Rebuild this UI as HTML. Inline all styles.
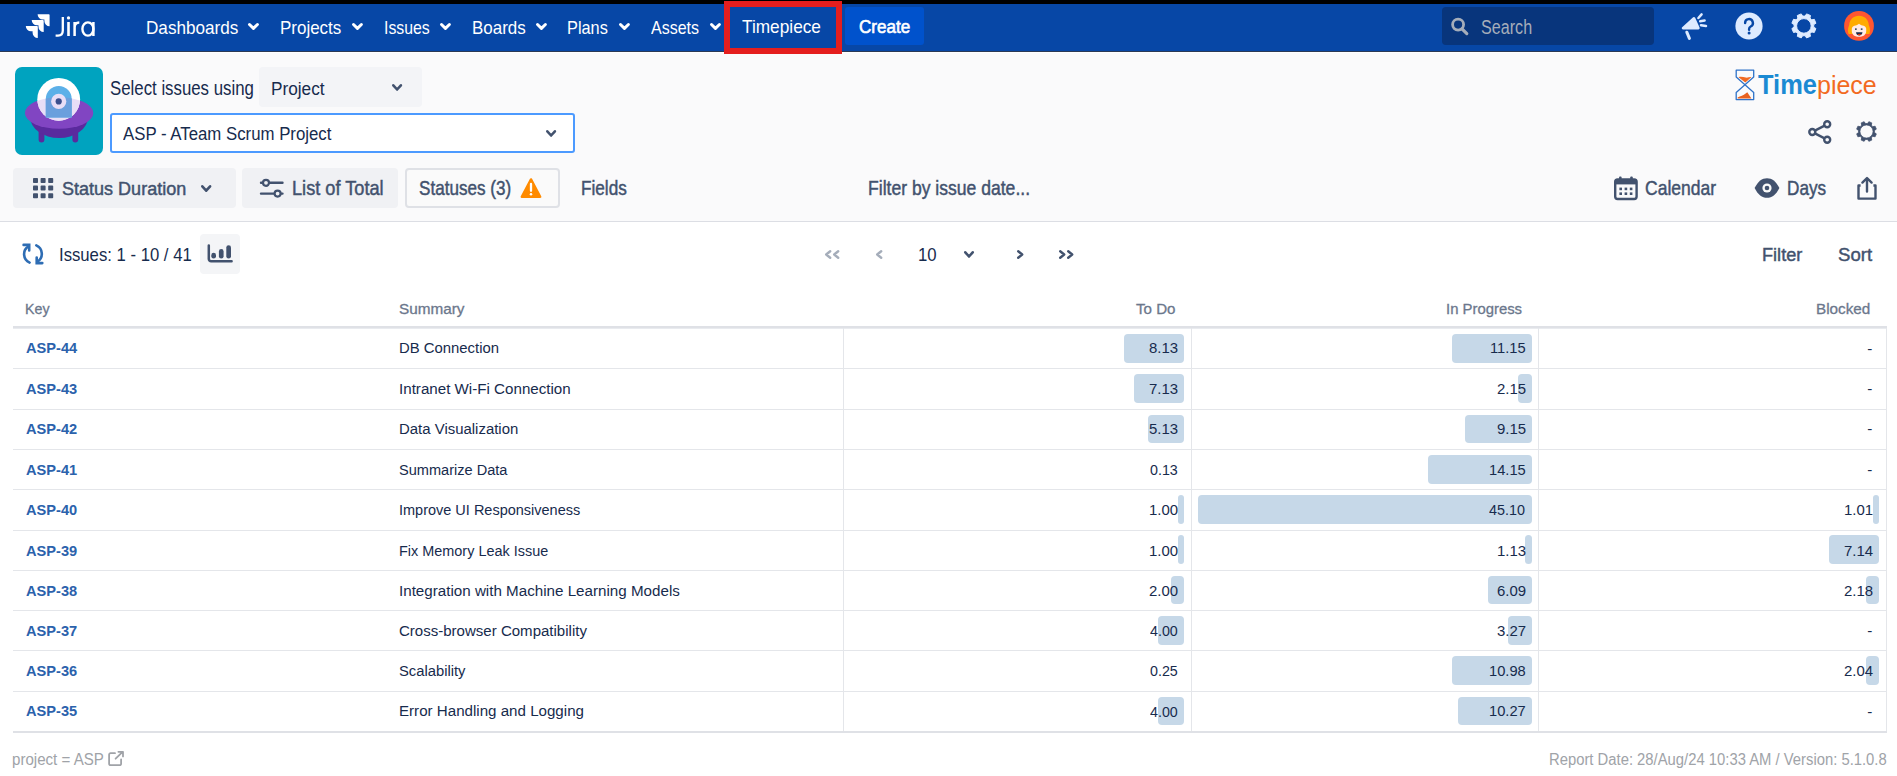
<!DOCTYPE html>
<html><head><meta charset="utf-8"><style>
html,body{margin:0;padding:0;}
body{width:1897px;height:776px;overflow:hidden;position:relative;background:#fff;font-family:"Liberation Sans", sans-serif;}
.t{position:absolute;white-space:nowrap;line-height:1;transform-origin:0 0;}
.r{position:absolute;box-sizing:content-box;}
svg.r{overflow:visible;}
</style></head><body>
<div class="r" style="left:0px;top:0px;width:1897px;height:4px;background:#000;"></div>
<div class="r" style="left:0px;top:4px;width:1897px;height:47px;background:#0747a6;"></div>
<div class="r" style="left:0px;top:51px;width:1897px;height:1px;background:#2c3a55;"></div>
<div class="r" style="left:0px;top:52px;width:1897px;height:1px;background:#ffffff;"></div>
<div class="r" style="left:0px;top:53px;width:1897px;height:168px;background:#fafafb;"></div>
<div class="r" style="left:0px;top:221px;width:1897px;height:1px;background:#dcdee4;"></div>
<svg class="r" style="left:24px;top:12px;" width="28" height="28" viewBox="0 0 28 28">
<defs>
<linearGradient id="g1" x1="1" y1="0" x2="0" y2="1"><stop offset="0" stop-color="#fff"/><stop offset="0.55" stop-color="#fff"/><stop offset="1" stop-color="#c8d7f0"/></linearGradient>
</defs>
<path d="M25.8 2.2 H13.6 a5.2 5.2 0 0 0 5.2 5.2 h1.6 v1.6 a5.2 5.2 0 0 0 5.2 5.2 V3 a0.8 0.8 0 0 0 -0.8 -0.8z" fill="#fff"/>
<path d="M19.9 8.1 H7.7 a5.2 5.2 0 0 0 5.2 5.2 h1.6 v1.6 a5.2 5.2 0 0 0 5.2 5.2 V8.9 a0.8 0.8 0 0 0 -0.8 -0.8z" fill="url(#g1)"/>
<path d="M14 14 H1.8 a5.2 5.2 0 0 0 5.2 5.2 h1.6 v1.6 a5.2 5.2 0 0 0 5.2 5.2 V14.8 a0.8 0.8 0 0 0 -0.8 -0.8z" fill="url(#g1)"/>
</svg>
<svg class="r" style="left:50px;top:12px;" width="50" height="30" viewBox="0 0 50 30">
<path d="M12.8 5 V18.6 C12.8 22.2 11 23.7 8 23.7 H5.6" fill="none" stroke="#fff" stroke-width="2.3"/>
<circle cx="18.5" cy="5.9" r="1.65" fill="#fff"/>
<path d="M18.5 10 V24" fill="none" stroke="#fff" stroke-width="2.6"/>
<path d="M24.6 10 V24 M24.6 15.5 C24.6 12 26.4 10.6 29.3 10.6" fill="none" stroke="#fff" stroke-width="2.5"/>
<ellipse cx="37.9" cy="17" rx="5.5" ry="6.6" fill="none" stroke="#fff" stroke-width="2.4"/>
<path d="M43.4 10 V24" fill="none" stroke="#fff" stroke-width="2.5"/>
</svg>
<div class="t" style="left:146.44px;top:18.80px;font-size:18.31px;color:#ffffff;transform:scaleX(0.9353);">Dashboards</div>
<svg class="r" style="left:246px;top:21px;" width="15" height="11" viewBox="0 0 15 11"><path d="M3.50 3.50 L7.45 7.30 L11.40 3.50" fill="none" stroke="#fff" stroke-width="3" stroke-linecap="round" stroke-linejoin="round"/></svg>
<div class="t" style="left:280.20px;top:18.80px;font-size:18.31px;color:#ffffff;transform:scaleX(0.9270);">Projects</div>
<svg class="r" style="left:350px;top:21px;" width="15" height="11" viewBox="0 0 15 11"><path d="M3.50 3.50 L7.45 7.30 L11.40 3.50" fill="none" stroke="#fff" stroke-width="3" stroke-linecap="round" stroke-linejoin="round"/></svg>
<div class="t" style="left:384.20px;top:18.80px;font-size:18.31px;color:#ffffff;transform:scaleX(0.8657);">Issues</div>
<svg class="r" style="left:438px;top:21px;" width="15" height="11" viewBox="0 0 15 11"><path d="M3.50 3.50 L7.45 7.30 L11.40 3.50" fill="none" stroke="#fff" stroke-width="3" stroke-linecap="round" stroke-linejoin="round"/></svg>
<div class="t" style="left:471.96px;top:18.80px;font-size:18.31px;color:#ffffff;transform:scaleX(0.9276);">Boards</div>
<svg class="r" style="left:534px;top:21px;" width="15" height="11" viewBox="0 0 15 11"><path d="M3.50 3.50 L7.45 7.30 L11.40 3.50" fill="none" stroke="#fff" stroke-width="3" stroke-linecap="round" stroke-linejoin="round"/></svg>
<div class="t" style="left:567.18px;top:18.80px;font-size:18.31px;color:#ffffff;transform:scaleX(0.8912);">Plans</div>
<svg class="r" style="left:617px;top:21px;" width="15" height="11" viewBox="0 0 15 11"><path d="M3.50 3.50 L7.45 7.30 L11.40 3.50" fill="none" stroke="#fff" stroke-width="3" stroke-linecap="round" stroke-linejoin="round"/></svg>
<div class="t" style="left:651.00px;top:18.80px;font-size:18.31px;color:#ffffff;transform:scaleX(0.8734);">Assets</div>
<svg class="r" style="left:708px;top:21px;" width="15" height="11" viewBox="0 0 15 11"><path d="M3.50 3.50 L7.45 7.30 L11.40 3.50" fill="none" stroke="#fff" stroke-width="3" stroke-linecap="round" stroke-linejoin="round"/></svg>
<div class="t" style="left:742.26px;top:19.45px;font-size:17.88px;color:#ffffff;transform:scaleX(0.9661);">Timepiece</div>
<div class="r" style="left:724px;top:1px;width:106px;height:41px;border:6px solid #e41e1e;"></div>
<div class="r" style="left:845px;top:7px;width:79px;height:38px;background:#0052cc;border-radius:3px;"></div>
<div class="t" style="left:859.05px;top:17.59px;font-size:18.02px;color:#fff;transform:scaleX(0.9475);-webkit-text-stroke:0.6px #fff;">Create</div>
<div class="r" style="left:1442px;top:7px;width:212px;height:38px;background:#08357c;border-radius:4px;"></div>
<svg class="r" style="left:1449px;top:16px;" width="22" height="22" viewBox="0 0 22 22"><circle cx="9.1" cy="8.6" r="5.5" fill="none" stroke="#a5adba" stroke-width="2.8"/><path d="M13 12.8 L17.8 17.6" stroke="#a5adba" stroke-width="3.2" stroke-linecap="round"/></svg>
<div class="t" style="left:1480.90px;top:17.79px;font-size:19.33px;color:#a5adba;transform:scaleX(0.8344);">Search</div>
<svg class="r" style="left:1678px;top:10px;" width="32" height="32" viewBox="0 0 32 32">
<path d="M5 18.1 L16 8.3 L20.4 18.1 Z" fill="#deebff" stroke="#deebff" stroke-width="2.6" stroke-linejoin="round"/>
<path d="M8.8 22.2 L11.4 28.4" stroke="#deebff" stroke-width="3" stroke-linecap="round"/>
<path d="M20.4 8 L23.6 4.4 M22.2 11.3 L26.6 10.5 M23 15.3 L28 16.1" stroke="#deebff" stroke-width="2.5" stroke-linecap="round"/>
</svg>
<svg class="r" style="left:1735px;top:12px;" width="28" height="28" viewBox="0 0 28 28">
<circle cx="14" cy="14" r="13.6" fill="#deebff"/>
<path d="M10.1 11 a3.9 3.9 0 1 1 5.6 3.5 c-1.1 0.6 -1.6 1.2 -1.6 2.4 v0.9" fill="none" stroke="#0747a6" stroke-width="2.4" stroke-linecap="round"/>
<circle cx="14.1" cy="21.1" r="1.5" fill="#0747a6"/>
</svg>
<svg class="r" style="left:1790px;top:12px;" width="28" height="28" viewBox="0 0 28 28"><path d="M23.72 15.19 L25.91 16.56 L24.27 20.51 L21.75 19.93 L19.93 21.75 L20.51 24.27 L16.56 25.91 L15.19 23.72 L12.61 23.72 L11.24 25.91 L7.29 24.27 L7.87 21.75 L6.05 19.93 L3.53 20.51 L1.89 16.56 L4.08 15.19 L4.08 12.61 L1.89 11.24 L3.53 7.29 L6.05 7.87 L7.87 6.05 L7.29 3.53 L11.24 1.89 L12.61 4.08 L15.19 4.08 L16.56 1.89 L20.51 3.53 L19.93 6.05 L21.75 7.87 L24.27 7.29 L25.91 11.24 L23.72 12.61Z M21.20 13.90 A7.3 7.3 0 1 0 6.60 13.90 A7.3 7.3 0 1 0 21.20 13.90Z" fill="#deebff" fill-rule="evenodd" stroke="#deebff" stroke-width="1" stroke-linejoin="round"/></svg>
<svg class="r" style="left:1843px;top:10px;" width="32" height="32" viewBox="0 0 32 32">
<circle cx="16" cy="15.9" r="14.9" fill="#ff5630"/>
<path d="M5.6 24 C4.2 20 5.4 17 6.2 15 C6.5 9.5 10.5 5.7 16 5.7 C21.5 5.7 25.5 9.5 25.8 15 C26.6 17 27.8 20 26.4 24 Z" fill="#ffab00"/>
<path d="M8.8 18.5 C9.5 16 11 15.6 12.5 15.4 C14 15.2 15.2 14.6 16 13.8 C16.8 14.6 18 15.2 19.5 15.4 C21 15.6 22.5 16 23.2 18.5 V21 C23.2 25 20 26.8 16 26.8 C12 26.8 8.8 25 8.8 21 Z" fill="#ffebe6"/>
<rect x="12" y="18.3" width="1.7" height="1.7" fill="#42526e"/><rect x="17.8" y="18.3" width="1.7" height="1.7" fill="#42526e"/>
<path d="M13 22.2 H19.5 C19.2 24.4 17.8 25.5 16.2 25.5 C14.6 25.5 13.3 24.4 13 22.2Z" fill="#172b4d"/>
<path d="M14.3 24.6 C15.4 23.6 17 23.6 18.2 24.6 C17.4 25.4 15.1 25.4 14.3 24.6Z" fill="#de350b"/>
</svg>
<svg class="r" style="left:15px;top:67px;" width="88" height="88" viewBox="0 0 88 88">
<defs>
<clipPath id="ell"><ellipse cx="44.1" cy="46" rx="34.2" ry="15.8"/></clipPath>
</defs>
<rect x="0" y="0" width="88" height="88" rx="7" fill="#00a3bf"/>
<rect x="23.6" y="58" width="5.8" height="17.4" rx="2.9" fill="#5a2a9e"/>
<rect x="57.4" y="58" width="5.8" height="17.4" rx="2.9" fill="#5a2a9e"/>
<ellipse cx="44.1" cy="50" rx="29" ry="21" fill="#5a2a9e"/>
<ellipse cx="44.1" cy="46" rx="34.2" ry="15.8" fill="#8145c2"/>
<circle cx="43.7" cy="32.3" r="21.4" fill="#ffffff"/>
<circle cx="43.7" cy="32.3" r="21.4" fill="#e9def6" clip-path="url(#ell)"/>
<path d="M30.8 50.6 V32 a12.95 12.95 0 0 1 25.9 0 V50.6 Z" fill="#5cb0e8"/>
<path d="M30.8 50.6 V32 a12.95 12.95 0 0 1 25.9 0 V50.6 Z" fill="#6a9fdd" clip-path="url(#ell)"/>
<circle cx="43.7" cy="34.4" r="7.6" fill="#e9def6"/>
<circle cx="43.7" cy="34.4" r="3.1" fill="#3c4f8e"/>
</svg>
<div class="t" style="left:109.70px;top:79.18px;font-size:19.33px;color:#172b4d;transform:scaleX(0.8695);">Select issues using</div>
<div class="r" style="left:259px;top:67px;width:163px;height:40px;background:#f3f4f7;border-radius:4px;"></div>
<div class="t" style="left:271.46px;top:79.71px;font-size:18.75px;color:#172b4d;transform:scaleX(0.9179);">Project</div>
<svg class="r" style="left:390px;top:82px;" width="14" height="11" viewBox="0 0 14 11"><path d="M3.30 3.30 L7.10 7.50 L10.90 3.30" fill="none" stroke="#42526e" stroke-width="2.6" stroke-linecap="round" stroke-linejoin="round"/></svg>
<div class="r" style="left:110px;top:113px;width:461px;height:36px;border:2px solid #4c9aff;border-radius:3px;background:#fff;"></div>
<div class="t" style="left:122.76px;top:125.07px;font-size:18.90px;color:#172b4d;transform:scaleX(0.8890);">ASP - ATeam Scrum Project</div>
<svg class="r" style="left:544px;top:128px;" width="14" height="11" viewBox="0 0 14 11"><path d="M3.30 3.30 L7.10 7.50 L10.90 3.30" fill="none" stroke="#42526e" stroke-width="2.6" stroke-linecap="round" stroke-linejoin="round"/></svg>
<svg class="r" style="left:1735px;top:69px;" width="20" height="32" viewBox="0 0 20 32">
<path d="M10.3 13.4 L3.5 8.2 C6 7.2 8.5 8.3 10.8 8.6 C13 8.9 14.6 7.8 16.3 8.2 Z" fill="#f06a22"/>
<path d="M2.6 29.6 V28.4 C5.5 27.2 8.5 26.6 10.6 24.6 L12.3 23.2 L16.4 29.6 Z" fill="#e8611f"/>
<path d="M1.2 1.2 H18.7 V7.9 L1.2 23.4 V30.6 H18.7 V23.4 L1.2 7.9 Z" fill="none" stroke="#2f72c8" stroke-width="1.3" stroke-linejoin="round"/>
</svg>
<div class="t" style="left:1757.70px;top:70.62px;font-size:27.62px;font-weight:700;color:#1b8ad3;transform:scaleX(0.9209);">Time</div>
<div class="t" style="left:1816.80px;top:71.57px;font-size:26.50px;color:#f26a21;transform:scaleX(0.9422);">piece</div>
<svg class="r" style="left:1806px;top:118px;" width="28" height="28" viewBox="0 0 28 28">
<circle cx="21.2" cy="6.3" r="3" fill="none" stroke="#42526e" stroke-width="2.4"/>
<circle cx="6.3" cy="14" r="3" fill="none" stroke="#42526e" stroke-width="2.4"/>
<circle cx="21.2" cy="21.8" r="3" fill="none" stroke="#42526e" stroke-width="2.4"/>
<path d="M8.9 12.6 L18.6 7.6 M8.9 15.4 L18.6 20.4" stroke="#42526e" stroke-width="2.4"/>
</svg>
<svg class="r" style="left:1853px;top:118px;" width="28" height="28" viewBox="0 0 28 28"><path d="M21.43 14.54 L23.32 15.86 L22.11 18.78 L19.85 18.37 L18.37 19.85 L18.78 22.11 L15.86 23.32 L14.54 21.43 L12.46 21.43 L11.14 23.32 L8.22 22.11 L8.63 19.85 L7.15 18.37 L4.89 18.78 L3.68 15.86 L5.57 14.54 L5.57 12.46 L3.68 11.14 L4.89 8.22 L7.15 8.63 L8.63 7.15 L8.22 4.89 L11.14 3.68 L12.46 5.57 L14.54 5.57 L15.86 3.68 L18.78 4.89 L18.37 7.15 L19.85 8.63 L22.11 8.22 L23.32 11.14 L21.43 12.46Z M20.10 13.50 A6.6 6.6 0 1 0 6.90 13.50 A6.6 6.6 0 1 0 20.10 13.50Z" fill="#42526e" fill-rule="evenodd" stroke="#42526e" stroke-width="0.8" stroke-linejoin="round"/></svg>
<div class="r" style="left:13px;top:168px;width:223px;height:40px;background:#f0f1f4;border-radius:4px;"></div>
<svg class="r" style="left:33px;top:178px;" width="21" height="21" viewBox="0 0 21 21"><rect x="0.0" y="0.0" width="5" height="5" rx="0.8" fill="#42526e"/><rect x="7.6" y="0.0" width="5" height="5" rx="0.8" fill="#42526e"/><rect x="15.2" y="0.0" width="5" height="5" rx="0.8" fill="#42526e"/><rect x="0.0" y="7.6" width="5" height="5" rx="0.8" fill="#42526e"/><rect x="7.6" y="7.6" width="5" height="5" rx="0.8" fill="#42526e"/><rect x="15.2" y="7.6" width="5" height="5" rx="0.8" fill="#42526e"/><rect x="0.0" y="15.2" width="5" height="5" rx="0.8" fill="#42526e"/><rect x="7.6" y="15.2" width="5" height="5" rx="0.8" fill="#42526e"/><rect x="15.2" y="15.2" width="5" height="5" rx="0.8" fill="#42526e"/></svg>
<div class="t" style="left:62.20px;top:179.65px;font-size:18.46px;color:#42526e;transform:scaleX(0.9775);-webkit-text-stroke:0.45px #42526e;">Status Duration</div>
<svg class="r" style="left:199px;top:183px;" width="14" height="11" viewBox="0 0 14 11"><path d="M3.30 3.30 L7.20 7.70 L11.10 3.30" fill="none" stroke="#42526e" stroke-width="2.6" stroke-linecap="round" stroke-linejoin="round"/></svg>
<div class="r" style="left:242px;top:168px;width:156px;height:40px;background:#f0f1f4;border-radius:4px;"></div>
<svg class="r" style="left:258px;top:178px;" width="28" height="22" viewBox="0 0 28 22">
<path d="M3 4.8 H24.5 M3 15.6 H24.5" stroke="#42526e" stroke-width="2.4" stroke-linecap="round"/>
<circle cx="8" cy="4.8" r="3" fill="#f0f1f4" stroke="#42526e" stroke-width="2.2"/>
<circle cx="19.6" cy="15.6" r="3" fill="#f0f1f4" stroke="#42526e" stroke-width="2.2"/>
</svg>
<div class="t" style="left:291.94px;top:178.51px;font-size:19.48px;color:#42526e;transform:scaleX(0.9333);-webkit-text-stroke:0.45px #42526e;">List of Total</div>
<div class="r" style="left:405px;top:168px;width:151px;height:36px;border:2px solid #dfe1e6;border-radius:4px;background:#fafafa;"></div>
<div class="t" style="left:418.68px;top:178.51px;font-size:19.48px;color:#42526e;transform:scaleX(0.8773);-webkit-text-stroke:0.45px #42526e;">Statuses (3)</div>
<svg class="r" style="left:519px;top:177px;" width="24" height="23" viewBox="0 0 24 23"><path d="M12 2.4 L21.2 19.8 H2.8 Z" fill="#ff8b00" stroke="#ff8b00" stroke-width="2.4" stroke-linejoin="round"/><path d="M12 7 V13.8" stroke="#fff" stroke-width="2.3" stroke-linecap="round"/><circle cx="12" cy="17.3" r="1.25" fill="#fff"/></svg>
<div class="t" style="left:580.94px;top:178.51px;font-size:19.48px;color:#42526e;transform:scaleX(0.8818);-webkit-text-stroke:0.45px #42526e;">Fields</div>
<div class="t" style="left:868.44px;top:179.43px;font-size:19.62px;color:#42526e;transform:scaleX(0.8956);-webkit-text-stroke:0.45px #42526e;">Filter by issue date...</div>
<svg class="r" style="left:1613px;top:175px;" width="26" height="26" viewBox="0 0 26 26">
<rect x="2.2" y="4.4" width="21.4" height="19.6" rx="2.4" fill="none" stroke="#42526e" stroke-width="2.4"/>
<rect x="2.2" y="4.4" width="21.4" height="5" fill="#42526e"/>
<rect x="6" y="1.6" width="2.6" height="5" rx="1" fill="#42526e"/><rect x="17.2" y="1.6" width="2.6" height="5" rx="1" fill="#42526e"/>
<rect x="6.4" y="12.6" width="2.6" height="2.6" fill="#42526e"/><rect x="11.6" y="12.6" width="2.6" height="2.6" fill="#42526e"/><rect x="16.8" y="12.6" width="2.6" height="2.6" fill="#42526e"/>
<rect x="6.4" y="17.4" width="2.6" height="2.6" fill="#42526e"/><rect x="11.6" y="17.4" width="2.6" height="2.6" fill="#42526e"/><rect x="16.8" y="17.4" width="2.6" height="2.6" fill="#42526e"/>
</svg>
<div class="t" style="left:1644.92px;top:178.67px;font-size:19.62px;color:#42526e;transform:scaleX(0.8929);-webkit-text-stroke:0.45px #42526e;">Calendar</div>
<svg class="r" style="left:1753px;top:176px;" width="28" height="24" viewBox="0 0 28 24">
<path d="M1.6 12 C5 5.2 9 2.2 14 2.2 C19 2.2 23 5.2 26.4 12 C23 18.8 19 21.8 14 21.8 C9 21.8 5 18.8 1.6 12Z" fill="#42526e"/>
<circle cx="14" cy="12" r="4.6" fill="#fafafa"/><circle cx="14" cy="12" r="2.3" fill="#42526e"/>
</svg>
<div class="t" style="left:1786.96px;top:178.67px;font-size:19.62px;color:#42526e;transform:scaleX(0.8747);-webkit-text-stroke:0.45px #42526e;">Days</div>
<svg class="r" style="left:1855px;top:175px;" width="24" height="26" viewBox="0 0 24 26">
<path d="M5.6 10.5 H3.5 V23.6 H20.5 V10.5 H18.4" fill="none" stroke="#42526e" stroke-width="2.4" stroke-linejoin="round"/>
<path d="M12 16.5 V3.2 M7.4 7.6 L12 3 L16.6 7.6" fill="none" stroke="#42526e" stroke-width="2.4" stroke-linecap="round" stroke-linejoin="round"/>
</svg>
<svg class="r" style="left:20px;top:241px;" width="26" height="26" viewBox="0 0 26 26">
<path d="M9.6 21.6 A9.2 9.2 0 0 1 8.4 5.4" fill="none" stroke="#2e6db4" stroke-width="2.6" stroke-linecap="round"/>
<path d="M3.6 3.9 H9.2 V9.4" fill="none" stroke="#2e6db4" stroke-width="2.6" stroke-linecap="round" stroke-linejoin="miter"/>
<path d="M16.3 4.4 A9.2 9.2 0 0 1 17.5 20.6" fill="none" stroke="#2e6db4" stroke-width="2.6" stroke-linecap="round"/>
<path d="M22.3 22.1 H16.7 V16.6" fill="none" stroke="#2e6db4" stroke-width="2.6" stroke-linecap="round" stroke-linejoin="miter"/>
</svg>
<div class="t" style="left:58.94px;top:246.39px;font-size:18.46px;color:#172b4d;transform:scaleX(0.9055);">Issues: 1 - 10 / 41</div>
<div class="r" style="left:200px;top:234px;width:40px;height:40px;background:#f4f5f7;border-radius:4px;"></div>
<svg class="r" style="left:205px;top:243px;" width="30" height="22" viewBox="0 0 30 22">
<path d="M3.8 2.6 V16 a2.3 2.3 0 0 0 2.3 2.3 H26.6" fill="none" stroke="#42526e" stroke-width="2.5" stroke-linecap="round"/>
<rect x="6.3" y="9.8" width="4.7" height="5.8" rx="2.35" fill="#42526e"/>
<rect x="13.9" y="6.1" width="4.7" height="9.5" rx="2.35" fill="#42526e"/>
<rect x="21.3" y="2.2" width="4.7" height="13.4" rx="2.35" fill="#42526e"/>
</svg>
<svg class="r" style="left:823px;top:248px;" width="10" height="13" viewBox="0 0 10 13"><path d="M7.20 3.20 L3.20 6.50 L7.20 9.80" fill="none" stroke="#a5adba" stroke-width="2.4" stroke-linecap="round" stroke-linejoin="round"/></svg>
<svg class="r" style="left:831px;top:248px;" width="10" height="13" viewBox="0 0 10 13"><path d="M7.20 3.20 L3.20 6.50 L7.20 9.80" fill="none" stroke="#a5adba" stroke-width="2.4" stroke-linecap="round" stroke-linejoin="round"/></svg>
<svg class="r" style="left:874px;top:248px;" width="10" height="13" viewBox="0 0 10 13"><path d="M7.20 3.20 L3.20 6.50 L7.20 9.80" fill="none" stroke="#a5adba" stroke-width="2.4" stroke-linecap="round" stroke-linejoin="round"/></svg>
<div class="t" style="left:917.92px;top:246.33px;font-size:18.90px;color:#172b4d;transform:scaleX(0.8843);">10</div>
<svg class="r" style="left:962px;top:249px;" width="14" height="11" viewBox="0 0 14 11"><path d="M3.30 3.30 L7.00 7.50 L10.70 3.30" fill="none" stroke="#42526e" stroke-width="2.6" stroke-linecap="round" stroke-linejoin="round"/></svg>
<svg class="r" style="left:1015px;top:248px;" width="10" height="13" viewBox="0 0 10 13"><path d="M3.20 3.20 L7.20 6.50 L3.20 9.80" fill="none" stroke="#42526e" stroke-width="2.4" stroke-linecap="round" stroke-linejoin="round"/></svg>
<svg class="r" style="left:1057px;top:248px;" width="10" height="13" viewBox="0 0 10 13"><path d="M3.20 3.20 L7.20 6.50 L3.20 9.80" fill="none" stroke="#42526e" stroke-width="2.4" stroke-linecap="round" stroke-linejoin="round"/></svg>
<svg class="r" style="left:1065px;top:248px;" width="10" height="13" viewBox="0 0 10 13"><path d="M3.20 3.20 L7.20 6.50 L3.20 9.80" fill="none" stroke="#42526e" stroke-width="2.4" stroke-linecap="round" stroke-linejoin="round"/></svg>
<div class="t" style="left:1761.68px;top:245.28px;font-size:19.19px;color:#42526e;transform:scaleX(0.9458);-webkit-text-stroke:0.45px #42526e;">Filter</div>
<div class="t" style="left:1837.68px;top:245.28px;font-size:19.19px;color:#42526e;transform:scaleX(0.9685);-webkit-text-stroke:0.45px #42526e;">Sort</div>
<div class="t" style="left:24.70px;top:301.20px;font-size:15.12px;color:#6b778c;transform:scaleX(0.9422);-webkit-text-stroke:0.3px #6b778c;">Key</div>
<div class="t" style="left:399.44px;top:300.56px;font-size:15.26px;color:#6b778c;transform:scaleX(1.0041);-webkit-text-stroke:0.3px #6b778c;">Summary</div>
<div class="t" style="left:1136.02px;top:300.56px;font-size:15.26px;color:#6b778c;transform:scaleX(0.9919);-webkit-text-stroke:0.3px #6b778c;">To Do</div>
<div class="t" style="left:1446.44px;top:300.56px;font-size:15.26px;color:#6b778c;transform:scaleX(0.9752);-webkit-text-stroke:0.3px #6b778c;">In Progress</div>
<div class="t" style="left:1816.46px;top:301.89px;font-size:14.97px;color:#6b778c;transform:scaleX(1.0209);-webkit-text-stroke:0.3px #6b778c;">Blocked</div>
<div class="r" style="left:13px;top:326px;width:1874px;height:2px;background:#dfe1e6;"></div>
<div class="r" style="left:13px;top:328px;width:1874px;height:1px;background:#e9ebef;"></div>
<div class="r" style="left:13px;top:368px;width:1874px;height:1px;background:#e4e6ea;"></div>
<div class="r" style="left:1123.8px;top:333.9px;width:60.0px;height:28.8px;background:#c6d8e8;border-radius:4px;"></div>
<div class="r" style="left:1452.3px;top:333.9px;width:79.5px;height:28.8px;background:#c6d8e8;border-radius:4px;"></div>
<div class="t" style="left:25.50px;top:340.35px;font-size:15.20px;font-weight:700;color:#2b62ac;transform:scaleX(0.9630);">ASP-44</div>
<div class="t" style="left:398.92px;top:340.35px;font-size:15.20px;color:#172b4d;transform:scaleX(0.9791);">DB Connection</div>
<div class="t" style="left:1148.66px;top:340.35px;font-size:15.20px;color:#172b4d;transform:scaleX(0.9846);">8.13</div>
<div class="t" style="left:1489.62px;top:340.35px;font-size:15.20px;color:#172b4d;transform:scaleX(0.9656);">11.15</div>
<div class="t" style="left:1867.24px;top:340.83px;font-size:15.20px;color:#172b4d;transform:scaleX(1.0000);">-</div>
<div class="r" style="left:13px;top:409px;width:1874px;height:1px;background:#e4e6ea;"></div>
<div class="r" style="left:1134.3px;top:374.2px;width:49.5px;height:28.8px;background:#c6d8e8;border-radius:4px;"></div>
<div class="r" style="left:1517.9px;top:374.2px;width:13.9px;height:28.8px;background:#c6d8e8;border-radius:4px;"></div>
<div class="t" style="left:25.50px;top:381.13px;font-size:15.20px;font-weight:700;color:#2b62ac;transform:scaleX(0.9630);">ASP-43</div>
<div class="t" style="left:398.92px;top:381.13px;font-size:15.20px;color:#172b4d;transform:scaleX(0.9972);">Intranet Wi-Fi Connection</div>
<div class="t" style="left:1148.66px;top:381.13px;font-size:15.20px;color:#172b4d;transform:scaleX(0.9846);">7.13</div>
<div class="t" style="left:1496.94px;top:381.13px;font-size:15.20px;color:#172b4d;transform:scaleX(0.9846);">2.15</div>
<div class="t" style="left:1867.24px;top:381.13px;font-size:15.20px;color:#172b4d;transform:scaleX(1.0000);">-</div>
<div class="r" style="left:13px;top:449px;width:1874px;height:1px;background:#e4e6ea;"></div>
<div class="r" style="left:1148.1px;top:414.5px;width:35.7px;height:28.8px;background:#c6d8e8;border-radius:4px;"></div>
<div class="r" style="left:1465.3px;top:414.5px;width:66.5px;height:28.8px;background:#c6d8e8;border-radius:4px;"></div>
<div class="t" style="left:25.50px;top:421.11px;font-size:15.20px;font-weight:700;color:#2b62ac;transform:scaleX(0.9630);">ASP-42</div>
<div class="t" style="left:398.92px;top:421.11px;font-size:15.20px;color:#172b4d;transform:scaleX(0.9833);">Data Visualization</div>
<div class="t" style="left:1148.66px;top:421.11px;font-size:15.20px;color:#172b4d;transform:scaleX(0.9846);">5.13</div>
<div class="t" style="left:1496.94px;top:421.11px;font-size:15.20px;color:#172b4d;transform:scaleX(0.9846);">9.15</div>
<div class="t" style="left:1867.24px;top:421.43px;font-size:15.20px;color:#172b4d;transform:scaleX(1.0000);">-</div>
<div class="r" style="left:13px;top:489px;width:1874px;height:1px;background:#e4e6ea;"></div>
<div class="r" style="left:1427.8px;top:454.8px;width:104.0px;height:28.8px;background:#c6d8e8;border-radius:4px;"></div>
<div class="t" style="left:25.50px;top:461.89px;font-size:15.20px;font-weight:700;color:#2b62ac;transform:scaleX(0.9630);">ASP-41</div>
<div class="t" style="left:398.92px;top:461.89px;font-size:15.20px;color:#172b4d;transform:scaleX(0.9589);">Summarize Data</div>
<div class="t" style="left:1149.85px;top:461.69px;font-size:15.20px;color:#172b4d;transform:scaleX(0.9391);">0.13</div>
<div class="t" style="left:1488.50px;top:461.89px;font-size:15.20px;color:#172b4d;transform:scaleX(0.9665);">14.15</div>
<div class="t" style="left:1867.24px;top:461.73px;font-size:15.20px;color:#172b4d;transform:scaleX(1.0000);">-</div>
<div class="r" style="left:13px;top:530px;width:1874px;height:1px;background:#e4e6ea;"></div>
<div class="r" style="left:1177.8px;top:495.1px;width:6.0px;height:28.8px;background:#c6d8e8;border-radius:4px;"></div>
<div class="r" style="left:1197.8px;top:495.1px;width:334.0px;height:28.8px;background:#c6d8e8;border-radius:4px;"></div>
<div class="r" style="left:1873.1px;top:495.1px;width:5.8px;height:28.8px;background:#c6d8e8;border-radius:4px;"></div>
<div class="t" style="left:25.50px;top:501.87px;font-size:15.20px;font-weight:700;color:#2b62ac;transform:scaleX(0.9630);">ASP-40</div>
<div class="t" style="left:398.92px;top:501.87px;font-size:15.20px;color:#172b4d;transform:scaleX(0.9541);">Improve UI Responsiveness</div>
<div class="t" style="left:1148.66px;top:501.87px;font-size:15.20px;color:#172b4d;transform:scaleX(0.9846);">1.00</div>
<div class="t" style="left:1489.30px;top:501.87px;font-size:15.20px;color:#172b4d;transform:scaleX(0.9455);">45.10</div>
<div class="t" style="left:1843.66px;top:501.87px;font-size:15.20px;color:#172b4d;transform:scaleX(0.9846);">1.01</div>
<div class="r" style="left:13px;top:570px;width:1874px;height:1px;background:#e4e6ea;"></div>
<div class="r" style="left:1177.8px;top:535.4px;width:6.0px;height:28.8px;background:#c6d8e8;border-radius:4px;"></div>
<div class="r" style="left:1524.8px;top:535.4px;width:7.0px;height:28.8px;background:#c6d8e8;border-radius:4px;"></div>
<div class="r" style="left:1828.9px;top:535.4px;width:50.0px;height:28.8px;background:#c6d8e8;border-radius:4px;"></div>
<div class="t" style="left:25.50px;top:542.65px;font-size:15.20px;font-weight:700;color:#2b62ac;transform:scaleX(0.9630);">ASP-39</div>
<div class="t" style="left:398.92px;top:542.65px;font-size:15.20px;color:#172b4d;transform:scaleX(0.9504);">Fix Memory Leak Issue</div>
<div class="t" style="left:1148.66px;top:542.65px;font-size:15.20px;color:#172b4d;transform:scaleX(0.9846);">1.00</div>
<div class="t" style="left:1496.94px;top:542.65px;font-size:15.20px;color:#172b4d;transform:scaleX(0.9846);">1.13</div>
<div class="t" style="left:1843.66px;top:542.65px;font-size:15.20px;color:#172b4d;transform:scaleX(0.9846);">7.14</div>
<div class="r" style="left:13px;top:610px;width:1874px;height:1px;background:#e4e6ea;"></div>
<div class="r" style="left:1170.8px;top:575.7px;width:13.0px;height:28.8px;background:#c6d8e8;border-radius:4px;"></div>
<div class="r" style="left:1488.2px;top:575.7px;width:43.6px;height:28.8px;background:#c6d8e8;border-radius:4px;"></div>
<div class="r" style="left:1865.7px;top:575.7px;width:13.2px;height:28.8px;background:#c6d8e8;border-radius:4px;"></div>
<div class="t" style="left:25.50px;top:582.63px;font-size:15.20px;font-weight:700;color:#2b62ac;transform:scaleX(0.9630);">ASP-38</div>
<div class="t" style="left:398.92px;top:582.63px;font-size:15.20px;color:#172b4d;transform:scaleX(0.9990);">Integration with Machine Learning Models</div>
<div class="t" style="left:1148.66px;top:582.63px;font-size:15.20px;color:#172b4d;transform:scaleX(0.9846);">2.00</div>
<div class="t" style="left:1496.94px;top:582.63px;font-size:15.20px;color:#172b4d;transform:scaleX(0.9846);">6.09</div>
<div class="t" style="left:1843.66px;top:582.63px;font-size:15.20px;color:#172b4d;transform:scaleX(0.9846);">2.18</div>
<div class="r" style="left:13px;top:650px;width:1874px;height:1px;background:#e4e6ea;"></div>
<div class="r" style="left:1158.2px;top:616.0px;width:25.6px;height:28.8px;background:#c6d8e8;border-radius:4px;"></div>
<div class="r" style="left:1507.5px;top:616.0px;width:24.3px;height:28.8px;background:#c6d8e8;border-radius:4px;"></div>
<div class="t" style="left:25.50px;top:622.61px;font-size:15.20px;font-weight:700;color:#2b62ac;transform:scaleX(0.9630);">ASP-37</div>
<div class="t" style="left:398.92px;top:622.61px;font-size:15.20px;color:#172b4d;transform:scaleX(0.9897);">Cross-browser Compatibility</div>
<div class="t" style="left:1149.85px;top:622.51px;font-size:15.20px;color:#172b4d;transform:scaleX(0.9391);">4.00</div>
<div class="t" style="left:1496.94px;top:622.61px;font-size:15.20px;color:#172b4d;transform:scaleX(0.9846);">3.27</div>
<div class="t" style="left:1867.24px;top:622.93px;font-size:15.20px;color:#172b4d;transform:scaleX(1.0000);">-</div>
<div class="r" style="left:13px;top:691px;width:1874px;height:1px;background:#e4e6ea;"></div>
<div class="r" style="left:1452.3px;top:656.3px;width:79.5px;height:28.8px;background:#c6d8e8;border-radius:4px;"></div>
<div class="r" style="left:1865.7px;top:656.3px;width:13.2px;height:28.8px;background:#c6d8e8;border-radius:4px;"></div>
<div class="t" style="left:25.50px;top:663.39px;font-size:15.20px;font-weight:700;color:#2b62ac;transform:scaleX(0.9630);">ASP-36</div>
<div class="t" style="left:398.92px;top:663.39px;font-size:15.20px;color:#172b4d;transform:scaleX(0.9727);">Scalability</div>
<div class="t" style="left:1149.85px;top:663.44px;font-size:15.20px;color:#172b4d;transform:scaleX(0.9391);">0.25</div>
<div class="t" style="left:1488.50px;top:663.39px;font-size:15.20px;color:#172b4d;transform:scaleX(0.9665);">10.98</div>
<div class="t" style="left:1843.66px;top:663.39px;font-size:15.20px;color:#172b4d;transform:scaleX(0.9846);">2.04</div>
<div class="r" style="left:1158.2px;top:696.6px;width:25.6px;height:28.8px;background:#c6d8e8;border-radius:4px;"></div>
<div class="r" style="left:1458.0px;top:696.6px;width:73.8px;height:28.8px;background:#c6d8e8;border-radius:4px;"></div>
<div class="t" style="left:25.50px;top:703.37px;font-size:15.20px;font-weight:700;color:#2b62ac;transform:scaleX(0.9630);">ASP-35</div>
<div class="t" style="left:398.92px;top:703.37px;font-size:15.20px;color:#172b4d;transform:scaleX(0.9957);">Error Handling and Logging</div>
<div class="t" style="left:1149.85px;top:703.57px;font-size:15.20px;color:#172b4d;transform:scaleX(0.9391);">4.00</div>
<div class="t" style="left:1488.50px;top:703.37px;font-size:15.20px;color:#172b4d;transform:scaleX(0.9665);">10.27</div>
<div class="t" style="left:1867.24px;top:703.53px;font-size:15.20px;color:#172b4d;transform:scaleX(1.0000);">-</div>
<div class="r" style="left:13px;top:731px;width:1874px;height:2px;background:#dfe1e6;"></div>
<div class="r" style="left:843px;top:328px;width:1px;height:403px;background:#e4e6ea;"></div>
<div class="r" style="left:1191px;top:328px;width:1px;height:403px;background:#e4e6ea;"></div>
<div class="r" style="left:1538px;top:328px;width:1px;height:403px;background:#e4e6ea;"></div>
<div class="r" style="left:1886px;top:328px;width:1px;height:403px;background:#e4e6ea;"></div>
<div class="t" style="left:11.94px;top:752.31px;font-size:15.60px;color:#a0a3a8;transform:scaleX(0.9674);">project = ASP</div>
<svg class="r" style="left:106px;top:749px;" width="20" height="20" viewBox="0 0 20 20">
<path d="M9 4.2 H4.6 a1.5 1.5 0 0 0 -1.5 1.5 V14.7 a1.5 1.5 0 0 0 1.5 1.5 H13.6 a1.5 1.5 0 0 0 1.5 -1.5 V10.4" fill="none" stroke="#a0a3a8" stroke-width="1.8" stroke-linecap="round"/>
<path d="M9.6 9.7 L16.6 2.9 M12.4 2.8 H17 V7.4" fill="none" stroke="#a0a3a8" stroke-width="1.8" stroke-linecap="round" stroke-linejoin="round"/>
</svg>
<div class="t" style="left:1548.68px;top:751.53px;font-size:15.60px;color:#a0a3a8;transform:scaleX(0.9502);">Report Date: 28/Aug/24 10:33 AM / Version: 5.1.0.8</div>
</body></html>
